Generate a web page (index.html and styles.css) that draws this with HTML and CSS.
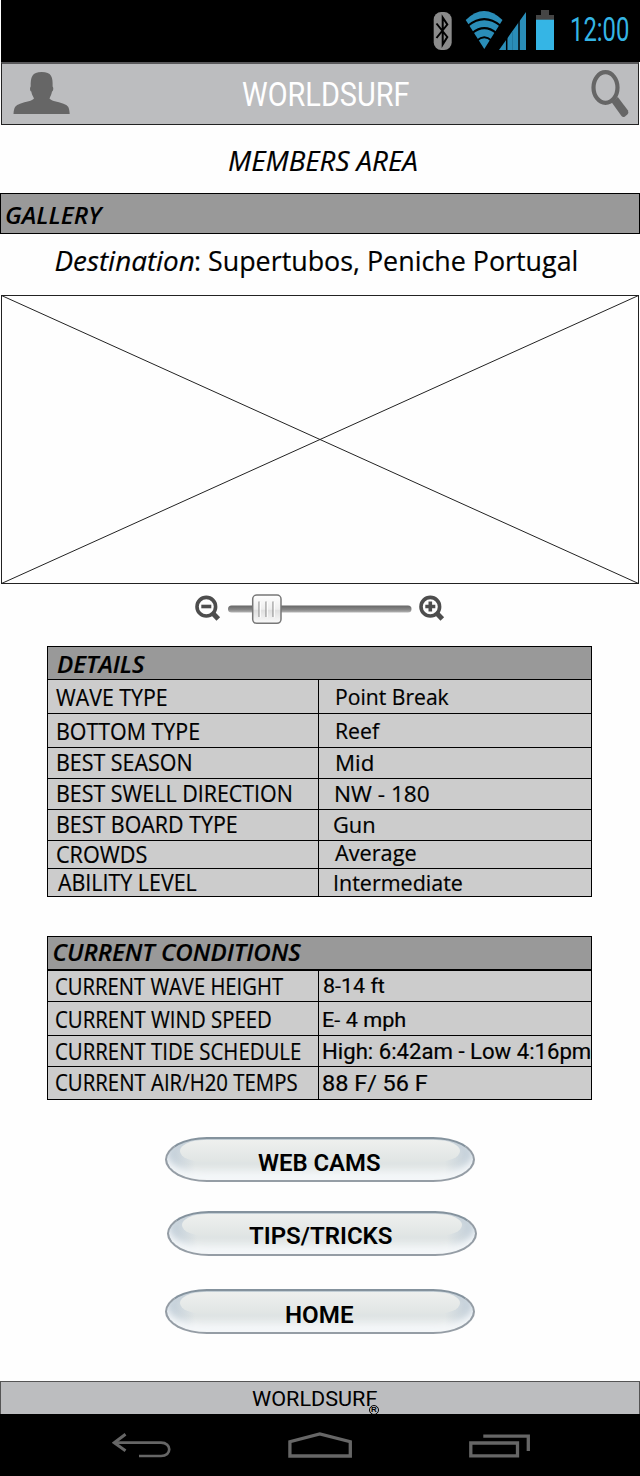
FILE: index.html
```
<!DOCTYPE html>
<html lang="en">
<head>
<meta charset="utf-8">
<title>Worldsurf - Members Area</title>
<link rel="stylesheet" href="styles.css">
</head>
<body>
<div class="status-bar">
  <svg class="status-icons" width="124" height="44" viewBox="432 8 124 44">
    <rect x="433.7" y="12" width="18" height="38" rx="7.5" fill="#8b8b8b"/>
    <path d="M436.500 23.500L447.300 37L442.700 44.500V17.500L447.300 24.500L436.500 38" fill="none" stroke="#000" stroke-width="2"/>
    <path d="M465.700 20Q484 2 502.500 20L484.300 49Z" fill="#2a8db8"/>
    <path d="M468 25.800Q484.300 12.500 500.500 25.800M472 33.200Q484.300 23 496.600 33.200M477 40.500Q484.300 34 491.500 40.500" fill="none" stroke="#000" stroke-width="2"/>
    <path d="M499 50L526 12V50Z" fill="#2a8db8"/>
    <path d="M506.700 36V50M519 18V50" stroke="#000" stroke-width="1.500"/>
    <path d="M512.500 31V50" stroke="#227aa1" stroke-width="1"/>
    <path d="M541 10h8v5h5v5h-18v-5h5z" fill="#454545"/>
    <rect x="536" y="19.700" width="18" height="30.300" fill="#35b5e5"/>
  </svg>
  <span class="t clock">12:00</span>
</div>

<header class="app-bar">
  <svg class="icon-user" width="58" height="44" viewBox="13 71 58 44">
    <path d="M13.500 114C14 107 15.500 105.500 20 103.800C26 101.500 32.500 101 34 98.500C33 96 31.700 94.500 31.300 91.500C29.800 91 29.700 87.500 30.700 86.500C30.500 77 32 72 41.700 72C51.500 72 53 77 52.600 86.500C53.700 87.500 53.400 91 52 91.500C51.500 94.500 50.500 96 49.500 98.500C51 101 57.500 101.500 63.500 103.800C68 105.500 69.300 107 69.700 114Z" fill="#666"/>
  </svg>
  <span class="t brand">WORLDSURF</span>
  <svg class="icon-search" width="40" height="50" viewBox="590 69 40 50">
    <ellipse cx="605.500" cy="87.500" rx="12" ry="15.300" fill="none" stroke="#666" stroke-width="4.200"/>
    <path d="M611.800 102.500L617.800 97L628 110.500Q629 112.500 627.300 114.500L625 116.500Q623 117.800 621.500 116Z" fill="#666"/>
  </svg>
</header>

<main>
  <h1 class="page-title"><span class="t">MEMBERS AREA</span></h1>
  <h2 class="gallery-bar"><span class="t">GALLERY</span></h2>
  <p class="destination"><span class="t dest-label">Destination</span><span class="t dest-value">: Supertubos, Peniche Portugal</span></p>
  <svg class="photo" width="638" height="289" viewBox="0 0 638 289">
    <path d="M.5 .5L637.500 288.500M637.500 .5L.5 288.500" stroke="#222" fill="none"/>
    <rect x=".5" y=".5" width="637" height="288" fill="none" stroke="#222"/>
  </svg>
  <svg class="zoom-slider" width="252" height="32" viewBox="194 593 252 32">
    <defs>
      <linearGradient id="track" x2="0" y2="1"><stop offset="0" stop-color="#666"/><stop offset=".6" stop-color="#888"/><stop offset="1" stop-color="#b5b5b5"/></linearGradient>
      <linearGradient id="thumb" x2="0" y2="1"><stop offset="0" stop-color="#fff"/><stop offset=".5" stop-color="#eee"/><stop offset=".55" stop-color="#e0e0e0"/><stop offset="1" stop-color="#fafafa"/></linearGradient>
    </defs>
    <g fill="none" stroke="#4d4d4d">
      <circle cx="206.300" cy="606.700" r="9.300" stroke-width="3.600"/>
      <path d="M201.300 606.500h10" stroke-width="3.600"/>
      <path d="M212.500 613L218.300 619" stroke-width="5"/>
      <circle cx="430.300" cy="606.700" r="9.300" stroke-width="3.600"/>
      <path d="M425.300 606.500h10M430.300 601.500v10" stroke-width="3.600"/>
      <path d="M436.500 613L442.300 619" stroke-width="5"/>
    </g>
    <rect x="228" y="605.500" width="183.500" height="7" rx="3.500" fill="url(#track)"/>
    <rect x="252.700" y="595" width="28.300" height="28.300" rx="4" fill="url(#thumb)" stroke="#777" stroke-width="1.500"/>
    <path d="M259 601.500v15.500M266 601.500v15.500M273 601.500v15.500" stroke="#999" stroke-width="1.300"/>
    <path d="M260.300 602v15.500M267.300 602v15.500M274.300 602v15.500" stroke="#fff" stroke-width="1"/>
  </svg>

  <section class="table details">
    <h2 class="table-title"><span class="t">DETAILS</span></h2>
    <div class="row wave"><div class="label"><span class="t">WAVE TYPE</span></div><div class="value"><span class="t">Point Break</span></div></div>
    <div class="row bottom"><div class="label"><span class="t">BOTTOM TYPE</span></div><div class="value"><span class="t">Reef</span></div></div>
    <div class="row season"><div class="label"><span class="t">BEST SEASON</span></div><div class="value"><span class="t">Mid</span></div></div>
    <div class="row swell"><div class="label"><span class="t">BEST SWELL DIRECTION</span></div><div class="value"><span class="t">NW - 180</span></div></div>
    <div class="row board"><div class="label"><span class="t">BEST BOARD TYPE</span></div><div class="value"><span class="t">Gun</span></div></div>
    <div class="row crowds"><div class="label"><span class="t">CROWDS</span></div><div class="value"><span class="t">Average</span></div></div>
    <div class="row ability"><div class="label"><span class="t">ABILITY LEVEL</span></div><div class="value"><span class="t">Intermediate</span></div></div>
  </section>

  <section class="table conditions">
    <h2 class="table-title"><span class="t">CURRENT CONDITIONS</span></h2>
    <div class="row height"><div class="label"><span class="t">CURRENT WAVE HEIGHT</span></div><div class="value"><span class="t">8-14 ft</span></div></div>
    <div class="row wind"><div class="label"><span class="t">CURRENT WIND SPEED</span></div><div class="value"><span class="t">E- 4 mph</span></div></div>
    <div class="row tide"><div class="label"><span class="t">CURRENT TIDE SCHEDULE</span></div><div class="value"><span class="t">High: 6:42am - Low 4:16pm</span></div></div>
    <div class="row temps"><div class="label"><span class="t">CURRENT AIR/H20 TEMPS</span></div><div class="value"><span class="t">88 F/ 56 F</span></div></div>
  </section>

  <nav class="actions">
    <button class="pill webcams"><span class="t">WEB CAMS</span></button>
    <button class="pill tips"><span class="t">TIPS/TRICKS</span></button>
    <button class="pill home"><span class="t">HOME</span></button>
  </nav>
</main>

<footer class="footer"><span class="t footer-brand">WORLDSURF</span><span class="reg">R</span></footer>

<div class="nav-bar">
  <svg width="60" height="28" viewBox="112 1431 60 28" fill="none" stroke="#666" stroke-width="2.700">
    <path d="M115 1442.700H161C172 1442.700 172 1456 161 1456H139"/>
    <path d="M125.500 1434.300L114.200 1442.700L125.500 1450.800" stroke-width="3"/>
  </svg>
  <svg width="66" height="28" viewBox="287 1431 66 28" fill="none" stroke="#666" stroke-width="3.300">
    <path d="M289.900 1456V1441.700L319.800 1434L350.300 1441.700V1456Z"/>
  </svg>
  <svg width="64" height="28" viewBox="468 1431 64 28" fill="none" stroke="#666" stroke-width="3.300">
    <path d="M470.800 1443H517.500V1455.800H470.800ZM483.300 1436.200H528.300V1451"/>
  </svg>
</div>
</body>
</html>
```
FILE: styles.css
```
* { box-sizing: border-box; }

body {
  margin: 0;
  width: 640px;
  height: 1476px;
  display: flex;
  flex-direction: column;
  background: #fefefe;
  color: #000;
  font-family: "Open Sans", "Noto Sans", sans-serif;
  overflow: hidden;
}

h1, h2, p { margin: 0; font-weight: 400; }
svg { display: block; flex: none; }

/* Condensed text: --s is the horizontal scale, --x and --y are nudges */
.t {
  display: inline-block;
  white-space: pre;
  transform-origin: 0 50%;
  transform: translate(var(--x, 0), var(--y, 0)) scaleX(var(--s, 1));
}

.status-bar {
  display: flex;
  height: 62px;
  margin-left: 1px;
  padding: 8px 0 0 431px;
  background: #000;
}
.clock {
  --s: .7;
  width: 60px;
  margin-left: 14px;
  font: 34px/42px Roboto, sans-serif;
  color: #35b5e5;
}

.app-bar {
  display: flex;
  height: 63px;
  margin: 0 1px;
  border: 1px solid #222;
  border-top: 2px solid #58585a;
  background: #bcbdbf;
}
.icon-user { margin: 7px 0 0 11px; }
.brand {
  --s: .85;
  --y: 0px;
  width: 168px;
  margin-left: 171px;
  font: 34px/60px Roboto, sans-serif;
  color: #fff;
}
.icon-search { margin: 5px 0 0 180px; }

.page-title {
  --s: .989;
  --y: 1px;
  height: 68px;
  padding-left: 228px;
  font: italic 28px/68px "Open Sans", sans-serif;
}

.gallery-bar {
  --s: 1.02;
  --y: 1px;
  height: 41px;
  padding-left: 4px;
  border: 1px solid #000;
  background: #999;
  font: italic 600 24px/39px "Open Sans", sans-serif;
}

.destination {
  --y: -4px;
  display: flex;
  height: 61px;
  padding-left: 54px;
  font-size: 27.5px;
  line-height: 61px;
}
.dest-label { --s: 1.012; --x: .5px; width: 140px; font-style: italic; }
.dest-value { --s: .976; }
.page-title, .destination, .table { -webkit-text-stroke: .2px #000; }

.photo { margin-left: 1px; }
.zoom-slider { margin: 9px 0 21px 194px; }

.table {
  width: 545px;
  margin-left: 47px;
  border: 1px solid #000;
  background: #ccc;
}
.table-title {
  height: 32px;
  background: #999;
  font: italic 600 24px/32px "Open Sans", sans-serif;
}
.row {
  --x: 1px;
  display: grid;
  grid-template-columns: 270px 1fr;
  height: 31px;
  line-height: 30px;
  border-top: 1px solid #000;
}
.label { padding-left: 7px; font-size: 23px; }
.value { border-left: 1px solid #000; font-size: 22.5px; }

.details { height: 251px; }
.details .table-title { --s: 1.005; --y: 1px; padding-left: 8.5px; }
.details .label { --s: .931; --y: -1px; }
.details .value { --y: 0px; padding-left: 15px; }
.wave, .bottom { height: 34px; line-height: 33px; }
.crowds, .ability { height: 28px; line-height: 27px; }
.wave .label { --s: .928; --x: 0px; --y: 1px; padding-left: 8px; }
.wave .value { --s: .939; }
.bottom .label { --y: 1px; }
.bottom .value { --s: .942; }
.season .value { --s: .99; }
.swell .value { --s: 1.005; padding-left: 14px; }
.board .value { --s: .97; --x: 0px; padding-left: 14px; }
.crowds .label { --s: .94; --y: 0px; }
.crowds .value { --s: .964; --x: 0px; --y: -2px; padding-left: 16px; }
.ability .label { --x: 0px; --y: 0px; padding-left: 10px; }
.ability .value { --s: .955; padding-left: 13px; }

.conditions { height: 164px; margin-top: 39px; }
.conditions .table-title { --s: 1.004; --x: .5px; --y: -1px; padding-left: 4px; }
.conditions .label { --s: .886; --y: 0px; padding-left: 5.5px; }
.conditions .value { padding-left: 3px; font-family: Roboto, sans-serif; font-size: 22px; }
.height { height: 32px; border-top-width: 2px; }
.wind { height: 34px; line-height: 33px; }
.temps { height: 33px; line-height: 32px; }
.conditions .height .label { --s: .88; }
.conditions .height .value { --s: 1.021; font-size: 21px; }
.conditions .wind .label { --y: 1px; }
.conditions .wind .value { --s: 1.03; --y: 2px; padding-left: 2px; font-size: 21px; }
.conditions .tide .value { --s: 1.007; --y: 1px; padding-left: 2px; }
.conditions .temps .label { --y: -1px; }
.conditions .temps .value { --s: 1.042; font-size: 22.5px; padding-left: 2px; }

.actions {
  display: flex;
  flex-direction: column;
  margin: 37px 0 0 165px;
}
.pill {
  --y: 3px;
  position: relative;
  width: 310px;
  height: 45px;
  padding: 0;
  border: 2px solid #959da5;
  border-top-color: #84929d;
  border-radius: 42px / 22.5px;
  background:
    linear-gradient(90deg, #bccad6 0, rgba(225, 230, 233, 0) 30px, rgba(225, 230, 233, 0) 280px, #bccad6 100%) border-box,
    linear-gradient(#b9c6cf 0, #dfe4e6 30%, #dfe4e4 60%, #f7f9fa 100%) border-box;
  box-shadow: inset 0 -6px 7px #f4f7f9;
  color: #000;
  font: 600 23px/43px Roboto, sans-serif;
  text-align: left;
}
.pill::before {
  content: "";
  position: absolute;
  left: 13px;
  right: 13px;
  top: 1px;
  height: 22px;
  border-radius: 24px / 11px;
  background: linear-gradient(#eef0ee, #e0e5e4);
}
.pill .t { position: relative; }
.webcams { --s: 1.038; padding-left: 90.5px; }
.tips { --s: 1.045; --y: 2px; margin: 29px 0 33px 2px; padding-left: 80px; }
.home { --s: 1.05; padding-left: 118px; }

.footer {
  position: relative;
  height: 33px;
  margin-top: 47px;
  padding-left: 251px;
  border: 1px solid #555;
  border-bottom: 0;
  background: #bcbdbf;
}
.footer-brand {
  --s: 1.055;
  --y: 1px;
  font: 20.5px/32px Roboto, sans-serif;
}
.reg {
  position: absolute;
  left: 368px;
  top: 23px;
  width: 10px;
  height: 10px;
  border: 1px solid #000;
  border-radius: 50%;
  font: 700 8px/8px "Liberation Sans", sans-serif;
  text-align: center;
}

.nav-bar {
  display: flex;
  flex: 1;
  padding: 17px 0 0 112px;
  background: #000;
}
.nav-bar svg + svg { margin-left: 115px; }
```
